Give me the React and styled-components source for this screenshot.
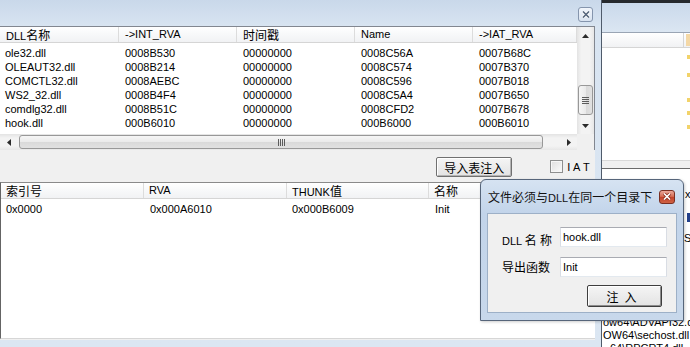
import React from "react";
import styled, { createGlobalStyle } from "styled-components";

const GlobalStyle = createGlobalStyle`
  html, body { margin: 0; padding: 0; background: #ffffff; }
  body {
    font-family: "Liberation Sans", "Noto Sans CJK SC", sans-serif;
    font-size: 11px;
    color: #000;
  }
  * { box-sizing: border-box; }
`;

// CJK runs are drawn a bit larger than the latin text, like the SimSun/Tahoma mix
const Han = styled.span`
  font-family: "Noto Sans CJK SC", sans-serif;
  font-size: 12px;
`;

const T = ({ children }) =>
  String(children)
    .split(/([\u3400-\u9fff]+)/)
    .map((part, i) => (i % 2 ? <Han key={i}>{part}</Han> : part));

const upperCols = "119px 118px 118px 118px 1fr";
const lowerCols = "143px 143px 142px 143px 1fr";

const upperHead = ["DLL名称", "->INT_RVA", "时间戳", "Name", "->IAT_RVA"];
const dlls = [
  ["ole32.dll", "0008B530", "00000000", "0008C56A", "0007B68C"],
  ["OLEAUT32.dll", "0008B214", "00000000", "0008C574", "0007B370"],
  ["COMCTL32.dll", "0008AEBC", "00000000", "0008C596", "0007B018"],
  ["WS2_32.dll", "0008B4F4", "00000000", "0008C5A4", "0007B650"],
  ["comdlg32.dll", "0008B51C", "00000000", "0008CFD2", "0007B678"],
  ["hook.dll", "000B6010", "00000000", "000B6000", "000B6010"],
];

const lowerHead = ["索引号", "RVA", "THUNK值", "名称", ""];
const funcs = [["0x0000", "0x000A6010", "0x000B6009", "Init", ""]];

const Screen = styled.div`
  position: relative;
  width: 690px;
  height: 347px;
  overflow: hidden;
  display: flex;
`;

const MainWindow = styled.div`
  width: 602px;
  flex: none;
  display: flex;
  flex-direction: column;
  border-right: 1px solid #4f5b6b;
  background: linear-gradient(#c9d8ea, #d8e4f1 26px, #dbe6f2);
`;

const TitleBar = styled.div`
  height: 26px;
  flex: none;
  display: flex;
  justify-content: flex-end;
  align-items: flex-start;
  padding: 7px 8px 0 0;
`;

const FrameClose = styled.div`
  width: 15px;
  height: 15px;
  border: 1px solid #8595ad;
  border-radius: 3px;
  background: linear-gradient(#f1f5fb, #d9e3f0);
  display: flex;
  align-items: center;
  justify-content: center;
`;

const Client = styled.div`
  flex: 1;
  margin: 0 6px 7px 0;
  display: flex;
  flex-direction: column;
  background: #f0f0f0;
`;

const UpperList = styled.div`
  height: 124px;
  flex: none;
  border-top: 1px solid #828790;
  border-right: 1px solid #828790;
  background: #fff;
  display: grid;
  grid-template-columns: 1fr 17px;
  grid-template-rows: 1fr 16px;
`;

const Pane = styled.div`
  display: flex;
  flex-direction: column;
  overflow: hidden;
  background: #fff;
`;

const HeaderRow = styled.div`
  display: grid;
  grid-template-columns: ${(p) => p.$cols};
  height: 16px;
  flex: none;
  line-height: 15px;
  border-bottom: 1px solid #d5d5d5;
  background: linear-gradient(#ffffff, #f8f9fa 45%, #f1f2f4);
`;

const HeaderCell = styled.div`
  padding-left: ${(p) => p.$pad}px;
  border-right: 1px solid #dcdcdc;
  white-space: nowrap;
  overflow: hidden;
`;

const Rows = styled.div`
  padding-top: 3px;
  overflow: hidden;
`;

const Row = styled.div`
  display: grid;
  grid-template-columns: ${(p) => p.$cols};
  height: 14px;
  line-height: 14px;
`;

const Cell = styled.div`
  padding-left: ${(p) => p.$pad}px;
  white-space: nowrap;
  overflow: hidden;
`;

const VScroll = styled.div`
  display: flex;
  flex-direction: column;
  background: linear-gradient(90deg, #e3e3e3, #f3f3f3 25%, #f3f3f3 75%, #e7e7e7);
`;

const HScroll = styled.div`
  display: flex;
  background: linear-gradient(#e3e3e3, #f3f3f3 25%, #f3f3f3 75%, #e7e7e7);
`;

const ArrowBox = styled.div`
  flex: none;
  width: 17px;
  height: ${(p) => (p.$horizontal ? "16px" : "17px")};
  display: flex;
  align-items: center;
  justify-content: center;
`;

const Track = styled.div`
  flex: 1;
  display: flex;
  flex-direction: ${(p) => (p.$horizontal ? "row" : "column")};
`;

const Thumb = styled.div`
  border: 1px solid #989898;
  border-radius: 3px;
  display: flex;
  align-items: center;
  justify-content: center;
  ${(p) =>
    p.$horizontal
      ? `
    height: 14px;
    margin: 1px 0 0 ${p.$offset}px;
    width: ${p.$size}px;
    background: linear-gradient(#f6f6f6, #eaeaea 50%, #d9d9d9 51%, #e1e1e1);
  `
      : `
    width: 15px;
    margin: ${p.$offset}px 0 0 1px;
    height: ${p.$size}px;
    background: linear-gradient(90deg, #f6f6f6, #eaeaea 50%, #d9d9d9 51%, #e1e1e1);
  `}
`;

const Corner = styled.div`
  background: #f0f0f0;
`;

const Toolbar = styled.div`
  height: 32px;
  flex: none;
  display: flex;
  align-items: flex-start;
  justify-content: flex-end;
  padding: 7px 5px 0 0;
  gap: 38px;
`;

const PushButton = styled.button`
  width: ${(p) => p.$w}px;
  height: ${(p) => p.$h}px;
  padding: 0;
  font: inherit;
  color: #000;
  letter-spacing: ${(p) => p.$spacing || 0}px;
  border: 1px solid ${(p) => (p.$default ? "#3e3e3e" : "#707070")};
  border-radius: 2px;
  background: linear-gradient(#f5f5f5, #ececec 50%, #e3e3e3);
  box-shadow: inset 1px 1px #ffffff,
    inset -1px -1px ${(p) => (p.$default ? "#8c8c8c" : "#b4b4b4")};
  display: flex;
  align-items: center;
  justify-content: center;
`;

const CheckLabel = styled.label`
  display: flex;
  align-items: center;
  gap: 4px;
  height: 20px;
  letter-spacing: 0.2px;
`;

const CheckBox = styled.span`
  width: 13px;
  height: 13px;
  margin-top: -2px;
  border: 1px solid #8e8f8f;
  background: linear-gradient(135deg, #dedede, #fbfbfb);
  box-shadow: inset 0 0 0 1px #f6f6f6;
`;

const LowerList = styled.div`
  flex: 1;
  margin-bottom: 1px;
  display: flex;
  flex-direction: column;
  background: #fff;
  border-top: 1px solid #8a8a8a;
  border-left: 1px solid #646464;
  border-bottom: 1px solid #d6d6d6;
`;

const BackWindow = styled.div`
  flex: 1;
  display: flex;
  flex-direction: column;
  background: #fff;
  overflow: hidden;
`;

const BackTop = styled.div`
  height: 3px;
  flex: none;
  background: #26292d;
`;

const BackFrame = styled.div`
  height: 29px;
  flex: none;
  background: linear-gradient(#cad9eb, #dbe6f2);
`;

const BackHeader = styled.div`
  height: 16px;
  flex: none;
  display: flex;
  border-top: 1px solid #9aa5b4;
  border-bottom: 1px solid #d5d5d5;
  background: linear-gradient(#ffffff, #f1f2f4);
`;

const BackHeadCell = styled.div`
  width: ${(p) => p.$w}px;
  flex: none;
  border-right: 1px solid #d5d5d5;
`;

const BackHeadTag = styled.div`
  flex: 1;
  margin: 1px 0 1px 2px;
  background: #f4d8a6;
`;

const BackBody = styled.div`
  height: 112px;
  flex: none;
  display: flex;
  flex-direction: column;
  padding-left: 85px;
`;

const Dot = styled.span`
  width: 3px;
  height: 4px;
  margin-top: ${(p) => p.$gap}px;
  background: #f2d36a;
`;

const BackStrip = styled.div`
  height: 9px;
  flex: none;
  background: #f0f0f0;
  border-top: 1px solid #d9d9d9;
  border-bottom: 1px solid #6b6b6b;
`;

const BackLower = styled.div`
  flex: 1;
  display: flex;
  flex-direction: column;
  font-size: 11px;
`;

const Line = styled.div`
  height: 13px;
  line-height: 13px;
  margin-top: ${(p) => p.$gap || 0}px;
  padding-left: ${(p) => p.$indent}px;
  white-space: nowrap;
  flex: none;
`;

const BlueMark = styled.div`
  width: 3px;
  height: 9px;
  margin: ${(p) => p.$gap}px 0 0 85px;
  background: #23408a;
  flex: none;
`;

const Dialog = styled.div`
  position: absolute;
  left: 480px;
  top: 179px;
  width: 204px;
  height: 142px;
  display: flex;
  flex-direction: column;
  padding: 0 6px 7px;
  border: 1px solid #56657a;
  border-radius: 6px 6px 0 0;
  background: linear-gradient(#d6e3f2, #c2d4ea 34px, #c8d8eb);
  box-shadow: 1px 1px 3px rgba(0, 0, 0, 0.2);
`;

const DialogTitle = styled.div`
  height: 33px;
  flex: none;
  display: flex;
  align-items: center;
  justify-content: space-between;
  padding: 0 2px 0 1px;
  color: #111;
`;

const DialogClose = styled.div`
  width: 16px;
  height: 14px;
  border: 1px solid #7a2f22;
  border-radius: 3px;
  background: linear-gradient(#eba89a, #d46d55 45%, #c3432b 52%, #cf6244);
  display: flex;
  align-items: center;
  justify-content: center;
`;

const DialogBody = styled.div`
  flex: 1;
  border: 1px solid #9db0c7;
  background: #f0f0f0;
  display: grid;
  grid-template-columns: 58px 107px;
  grid-template-rows: 20px 20px 22px;
  row-gap: 10px;
  align-content: start;
  padding: 13px 0 0 14px;
`;

const FieldLabel = styled.div`
  align-self: ${(p) => (p.$low ? "end" : "center")};
  height: 14px;
  line-height: 14px;
  white-space: nowrap;
`;

const Field = styled.input`
  width: 107px;
  height: 20px;
  padding: 0 2px;
  font: inherit;
  color: #000;
  background: #fff;
  border: 1px solid;
  border-color: #a9abb2 #d9dde4 #e3e9ef #d9dde4;
  outline: none;
`;

const DialogActions = styled.div`
  grid-column: 2;
  display: flex;
  justify-content: flex-end;
  padding-right: 5px;
  margin-top: -2px;
`;

const Arrow = ({ dir }) => {
  const pts = {
    up: "0,4 3.5,0 7,4",
    down: "0,0 3.5,4 7,0",
    left: "4,0 0,3.5 4,7",
    right: "0,0 4,3.5 0,7",
  }[dir];
  const horiz = dir === "left" || dir === "right";
  return (
    <svg width={horiz ? 4 : 7} height={horiz ? 7 : 4}>
      <polygon points={pts} fill="#2b2b2b" />
    </svg>
  );
};

const Grip = ({ horizontal }) =>
  horizontal ? (
    <svg width="7" height="7">
      {[0, 2, 4, 6].map((x) => (
        <rect key={x} x={x} y="0" width="1" height="7" fill="#5c5c5c" />
      ))}
    </svg>
  ) : (
    <svg width="7" height="7">
      {[0, 2, 4, 6].map((y) => (
        <rect key={y} x="0" y={y} width="7" height="1" fill="#5c5c5c" />
      ))}
    </svg>
  );

const CrossIcon = ({ color, shade, size = 8 }) => (
  <svg width={size} height={size - 1} viewBox="0 0 8 7">
    {shade && (
      <path d="M1 0.5 L7 6.5 M7 0.5 L1 6.5" stroke={shade} strokeWidth="3.2" />
    )}
    <path d="M1 0.5 L7 6.5 M7 0.5 L1 6.5" stroke={color} strokeWidth="1.6" />
  </svg>
);

const Table = ({ cols, head, rows, headPad, cellPad }) => (
  <>
    <HeaderRow $cols={cols}>
      {head.map((h, i) => (
        <HeaderCell key={i} $pad={headPad}>
          <T>{h}</T>
        </HeaderCell>
      ))}
    </HeaderRow>
    <Rows>
      {rows.map((r, i) => (
        <Row key={i} $cols={cols}>
          {r.map((c, j) => (
            <Cell key={j} $pad={cellPad(j)}>
              {c}
            </Cell>
          ))}
        </Row>
      ))}
    </Rows>
  </>
);

const dots = [7, 14, 21, 9, 10];

export default function App() {
  return (
    <>
      <GlobalStyle />
      <Screen>
        <MainWindow>
          <TitleBar>
            <FrameClose>
              <CrossIcon color="#56667d" shade="#ffffff" size={8} />
            </FrameClose>
          </TitleBar>
          <Client>
            <UpperList>
              <Pane>
                <Table
                  cols={upperCols}
                  head={upperHead}
                  rows={dlls}
                  headPad={6}
                  cellPad={(j) => (j === 0 ? 5 : 6)}
                />
              </Pane>
              <VScroll>
                <ArrowBox>
                  <Arrow dir="up" />
                </ArrowBox>
                <Track>
                  <Thumb $offset={41} $size={30}>
                    <Grip />
                  </Thumb>
                </Track>
                <ArrowBox>
                  <Arrow dir="down" />
                </ArrowBox>
              </VScroll>
              <HScroll>
                <ArrowBox $horizontal>
                  <Arrow dir="left" />
                </ArrowBox>
                <Track $horizontal>
                  <Thumb $horizontal $offset={2} $size={524}>
                    <Grip horizontal />
                  </Thumb>
                </Track>
                <ArrowBox $horizontal>
                  <Arrow dir="right" />
                </ArrowBox>
              </HScroll>
              <Corner />
            </UpperList>

            <Toolbar>
              <PushButton $w={76} $h={20}>
                <T>导入表注入</T>
              </PushButton>
              <CheckLabel>
                <CheckBox />I A T
              </CheckLabel>
            </Toolbar>

            <LowerList>
              <Table
                cols={lowerCols}
                head={lowerHead}
                rows={funcs}
                headPad={5}
                cellPad={(j) => (j === 1 || j === 3 ? 6 : 5)}
              />
            </LowerList>
          </Client>
        </MainWindow>

        <BackWindow>
          <BackTop />
          <BackFrame />
          <BackHeader>
            <BackHeadCell $w={82} />
            <BackHeadTag />
          </BackHeader>
          <BackBody>
            {dots.map((g, i) => (
              <Dot key={i} $gap={g} />
            ))}
          </BackBody>
          <BackStrip />
          <BackLower>
            <Line $gap={19} $indent={83}>x</Line>
            <BlueMark $gap={12} />
            <Line $gap={10} $indent={82}>SE</Line>
            <Line $gap={71} $indent={1}>ow64\ADVAPI32.dll</Line>
            <Line $indent={1}>OW64\sechost.dll</Line>
            <Line $indent={8}>64\RPCRT4.dll</Line>
          </BackLower>
        </BackWindow>

        <Dialog>
          <DialogTitle>
            <span>
              <T>文件必须与DLL在同一个目录下</T>
            </span>
            <DialogClose>
              <CrossIcon color="#ffffff" shade="#8a2c1c" size={8} />
            </DialogClose>
          </DialogTitle>
          <DialogBody>
            <FieldLabel $low>
              <T>DLL 名 称</T>
            </FieldLabel>
            <Field defaultValue="hook.dll" />
            <FieldLabel>
              <T>导出函数</T>
            </FieldLabel>
            <Field defaultValue="Init" />
            <DialogActions>
              <PushButton $w={75} $h={22} $default $spacing={6}>
                <T>注 入</T>
              </PushButton>
            </DialogActions>
          </DialogBody>
        </Dialog>
      </Screen>
    </>
  );
}
